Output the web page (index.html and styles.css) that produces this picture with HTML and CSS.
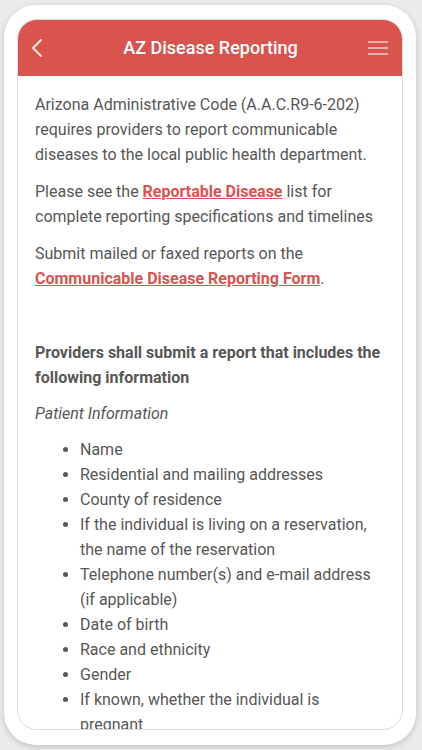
FILE: index.html
```html
<!DOCTYPE html>
<html lang="en">
<head>
<meta charset="utf-8">
<title>AZ Disease Reporting</title>
<link rel="stylesheet" href="styles.css">
</head>
<body>
<div class="frame">
  <div class="screen">
    <header class="bar">
      <svg class="back" width="14" height="20" viewBox="0 0 14 20"><polyline points="11,2 3,10 11,18" fill="none" stroke="#fbe3e2" stroke-width="2" stroke-linecap="round" stroke-linejoin="round"/></svg>
      <h1 class="title">AZ Disease Reporting</h1>
      <svg class="menu" width="22" height="16" viewBox="0 0 22 16"><g stroke="#f6cfcd" stroke-width="1.6" stroke-linecap="round"><line x1="1.5" y1="2" x2="20.5" y2="2"/><line x1="1.5" y1="8" x2="20.5" y2="8"/><line x1="1.5" y1="14" x2="20.5" y2="14"/></g></svg>
    </header>
    <main class="content">
      <p>Arizona Administrative Code (A.A.C.R9-6-202) requires providers to report communicable diseases to the local public health department.</p>
      <p>Please see the <a href="#">Reportable Disease</a> list for complete reporting specifications and timelines</p>
      <p>Submit mailed or faxed reports on the <a href="#">Communicable Disease Reporting Form</a>.</p>
      <p class="heading">Providers shall submit a report that includes the following information</p>
      <p class="sub">Patient Information</p>
      <ul class="list">
        <li>Name</li>
        <li>Residential and mailing addresses</li>
        <li>County of residence</li>
        <li>If the individual is living on a reservation, the name of the reservation</li>
        <li>Telephone number(s) and e-mail address (if applicable)</li>
        <li>Date of birth</li>
        <li>Race and ethnicity</li>
        <li>Gender</li>
        <li>If known, whether the individual is pregnant</li>
        <li>Occupation</li>
      </ul>
    </main>
  </div>
</div>
</body>
</html>
```

FILE: styles.css
```css
* { box-sizing: border-box; }
html, body { margin: 0; padding: 0; }
body {
  background: #ebebeb;
  width: 422px;
  height: 750px;
  overflow: hidden;
  padding: 5px 6px 5px 4px;
  font-family: Roboto, "Liberation Sans", sans-serif;
}
.frame {
  height: 740px;
  background: #fff;
  border-radius: 32px;
  box-shadow: 0 2px 6px rgba(0,0,0,0.18);
  padding: 14px 13px 15px 13px;
}
.screen {
  height: 711px;
  border: 1px solid #dcdcdc;
  border-radius: 20px;
  overflow: hidden;
  background: #fff;
}
.bar {
  height: 57px;
  margin: -1px -1px 0 -1px;
  background: #d9534f;
  display: flex;
  align-items: center;
  padding: 0 14px 0 13px;
}
.back { flex: none; }
.title {
  flex: 1;
  margin: 0;
  text-align: center;
  color: #fff;
  font-size: 18px;
  font-weight: 500;
  padding-left: 10px;
}
.menu { flex: none; margin-top: 1px; }
.content {
  padding: 16px 19px 0 17px;
  color: #575757;
  font-size: 16px;
  line-height: 25px;
}
.content p { margin: 0 0 12px 0; }
.content a {
  color: #d9534f;
  font-weight: 700;
  text-decoration: underline;
}
.content .heading {
  margin-top: 49px;
  font-weight: 700;
  margin-bottom: 11px;
}
.content .sub {
  font-style: italic;
  margin-bottom: 11px;
}
.list {
  margin: 0;
  padding-left: 45px;
}
.list li { margin: 0; }
```
